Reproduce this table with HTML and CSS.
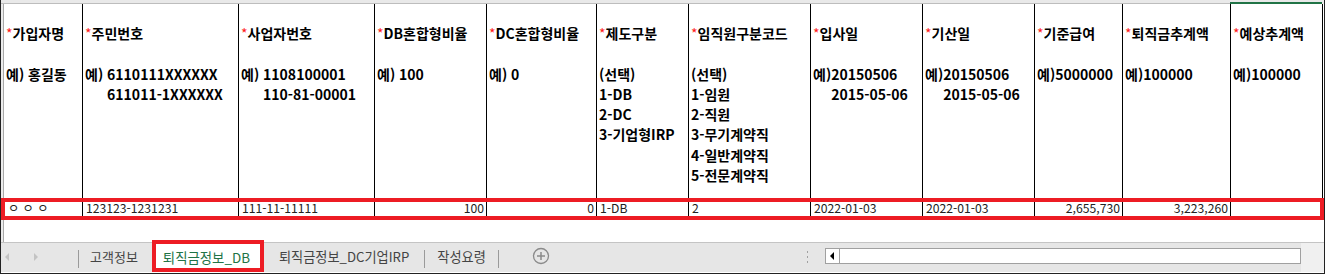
FILE: index.html
```html
<!DOCTYPE html>
<html lang="ko">
<head>
<meta charset="utf-8">
<link rel="stylesheet" href="styles.css">
</head>
<body>
<div class="frame">
  <div class="colhead"><div class="ch-rest"></div><div class="ch-sel"></div></div>
  <div class="sheet">
    <div class="rowhead"></div>
    <div class="grid">
      <div class="hc"><div class="t"><span class="req">*</span>가입자명</div><div class="ex">예) 홍길동</div></div>
      <div class="hc"><div class="t"><span class="req">*</span>주민번호</div><div class="ex"><span>예)&nbsp;</span><div>6110111XXXXXX<br>611011-1XXXXXX</div></div></div>
      <div class="hc"><div class="t"><span class="req">*</span>사업자번호</div><div class="ex"><span>예)&nbsp;</span><div>1108100001<br>110-81-00001</div></div></div>
      <div class="hc"><div class="t"><span class="req">*</span>DB혼합형비율</div><div class="ex">예) 100</div></div>
      <div class="hc"><div class="t"><span class="req">*</span>DC혼합형비율</div><div class="ex">예) 0</div></div>
      <div class="hc"><div class="t"><span class="req">*</span>제도구분</div><div class="ex"><div>(선택)<br>1-DB<br>2-DC<br>3-기업형IRP</div></div></div>
      <div class="hc"><div class="t"><span class="req">*</span>임직원구분코드</div><div class="ex"><div>(선택)<br>1-임원<br>2-직원<br>3-무기계약직<br>4-일반계약직<br>5-전문계약직</div></div></div>
      <div class="hc"><div class="t"><span class="req">*</span>입사일</div><div class="ex"><span>예)</span><div>20150506<br>2015-05-06</div></div></div>
      <div class="hc"><div class="t"><span class="req">*</span>기산일</div><div class="ex"><span>예)</span><div>20150506<br>2015-05-06</div></div></div>
      <div class="hc"><div class="t"><span class="req">*</span>기준급여</div><div class="ex">예)5000000</div></div>
      <div class="hc"><div class="t"><span class="req">*</span>퇴직금추계액</div><div class="ex">예)100000</div></div>
      <div class="hc"><div class="t"><span class="req">*</span>예상추계액</div><div class="ex">예)100000</div></div>

      <div class="dc first">ㅇ ㅇ ㅇ</div>
      <div class="dc">123123-1231231</div>
      <div class="dc">111-11-11111</div>
      <div class="dc num">100</div>
      <div class="dc num">0</div>
      <div class="dc">1-DB</div>
      <div class="dc">2</div>
      <div class="dc">2022-01-03</div>
      <div class="dc">2022-01-03</div>
      <div class="dc num">2,655,730</div>
      <div class="dc num">3,223,260</div>
      <div class="dc"></div>
    </div>
  </div>
  <div class="tabbar">
    <div class="nav"><span class="arr left"></span><span class="arr right"></span></div>
    <div class="sep"></div>
    <div class="tab t1">고객정보</div>
    <div class="tab active">퇴직금정보_DB</div>
    <div class="tab t3">퇴직금정보_DC기업IRP</div>
    <div class="sep"></div>
    <div class="tab t4">작성요령</div>
    <div class="sep"></div>
    <div class="add"><svg width="18" height="18" viewBox="0 0 18 18"><circle cx="9" cy="9" r="7.5" fill="none" stroke="#8a8a8a" stroke-width="1.3"/><path d="M9 5v8M5 9h8" stroke="#8a8a8a" stroke-width="1.5"/></svg></div>
    <div class="split"><i></i><i></i><i></i></div>
    <div class="hscroll"><div class="hbtn"><span class="tri"></span></div><div class="track"></div></div>
    <div class="corner"></div>
  </div>
  <div class="mark"></div>
</div>
</body>
</html>
```
FILE: styles.css
```css
html, body { margin: 0; padding: 0; background: #fff; }
body { font-family: "Noto Sans CJK KR", "Malgun Gothic", sans-serif; color: #000; }
.frame {
  position: relative;
  width: 1323px;
  height: 273px;
  border-left: 1px solid #222;
  border-right: 1px solid #222;
  border-bottom: 1px solid #222;
  overflow: hidden;
}
.colhead { display: flex; height: 4px; background: #e9e9e9; }
.ch-rest { flex: 0 0 1229px; border-bottom: 1px solid #bdbdbd; box-sizing: border-box; height: 4px; }
.ch-sel { flex: 0 0 92px; border-bottom: 2px solid #217346; box-sizing: border-box; height: 4px; }
.sheet { display: flex; height: 238px; }
.rowhead { flex: 0 0 2px; background: #ececec; border-right: 1px solid #a9a9a9; }
.grid {
  display: grid;
  grid-template-columns: 79px 156px 136px 112px 110px 92px 122px 112px 112px 88px 108px 92px;
  grid-template-rows: 196px 18px;
  align-content: start;
}
.hc {
  border-right: 1px solid #000;
  border-bottom: 1px solid #000;
  box-sizing: border-box;
  padding: 19px 0 0 2px;
  font-size: 14px;
  font-weight: 700;
  line-height: 20.3px;
  white-space: nowrap;
  overflow: hidden;
}
.hc .t { margin-bottom: 20.3px; }
.req { color: #ff1a1a; font-weight: 400; }
.ex { display: flex; }
.dc {
  border-right: 1px solid #000;
  border-bottom: 1px solid #000;
  box-sizing: border-box;
  font-size: 12.2px;
  line-height: 17px;
  padding: 0 2px 0 3px;
  white-space: nowrap;
  overflow: hidden;
  color: #222;
}
.dc.first { padding-left: 4px; }
.dc.num { text-align: right; }

.tabbar {
  display: flex;
  align-items: flex-start;
  height: 30px;
  box-sizing: border-box;
  border-top: 1px solid #c4c4c4;
  background: #e6e6e6;
  font-size: 13px;
  color: #444;
}
.nav { flex: 0 0 77px; height: 25px; position: relative; }
.arr { position: absolute; top: 10px; width: 0; height: 0; border-top: 4px solid transparent; border-bottom: 4px solid transparent; }
.arr.left { left: 4px; border-right: 4px solid #c3c3c3; }
.arr.right { left: 33px; border-left: 4px solid #c3c3c3; }
.sep { flex: 0 0 1px; height: 18px; margin-top: 7px; background: #9a9a9a; }
.tab { height: 25px; line-height: 27px; white-space: nowrap; }
.t1 { padding: 0 14px 0 11px; }
.active {
  margin-top: -3px;
  height: 32px;
  line-height: 26px;
  box-sizing: border-box;
  border: 4px solid #ed1c24;
  background: #fff;
  color: #217346;
  font-size: 13.4px;
  padding: 0 10px 0 7px;
  margin-right: 2px;
}
.t3 { padding: 0 15px 0 13px; font-size: 13.2px; }
.t4 { padding: 0 12px 0 12px; font-size: 13.2px; }
.add { margin-left: 33px; margin-top: 4px; height: 18px; }
.add svg { display: block; }
.split { margin-left: auto; display: flex; flex-direction: column; gap: 3px; margin-top: 8px; }
.split i { display: block; width: 1px; height: 2px; background: #a0a0a0; }
.hscroll {
  margin-left: 17px;
  margin-top: 5px;
  width: 476px;
  height: 16px;
  box-sizing: border-box;
  border: 1px solid #a0a0a0;
  background: #fff;
  display: flex;
}
.hbtn { flex: 0 0 13px; border-right: 1px solid #a0a0a0; position: relative; }
.tri { position: absolute; left: 4px; top: 3px; width: 0; height: 0; border-top: 4px solid transparent; border-bottom: 4px solid transparent; border-right: 4px solid #000; }
.track { flex: 1; }
.corner { flex: 0 0 23px; height: 29px; background: #f0f0f0; }
.mark {
  position: absolute;
  left: 0;
  top: 198px;
  width: 1323px;
  height: 22px;
  box-sizing: border-box;
  border: 4px solid #ed1c24;
}
```
